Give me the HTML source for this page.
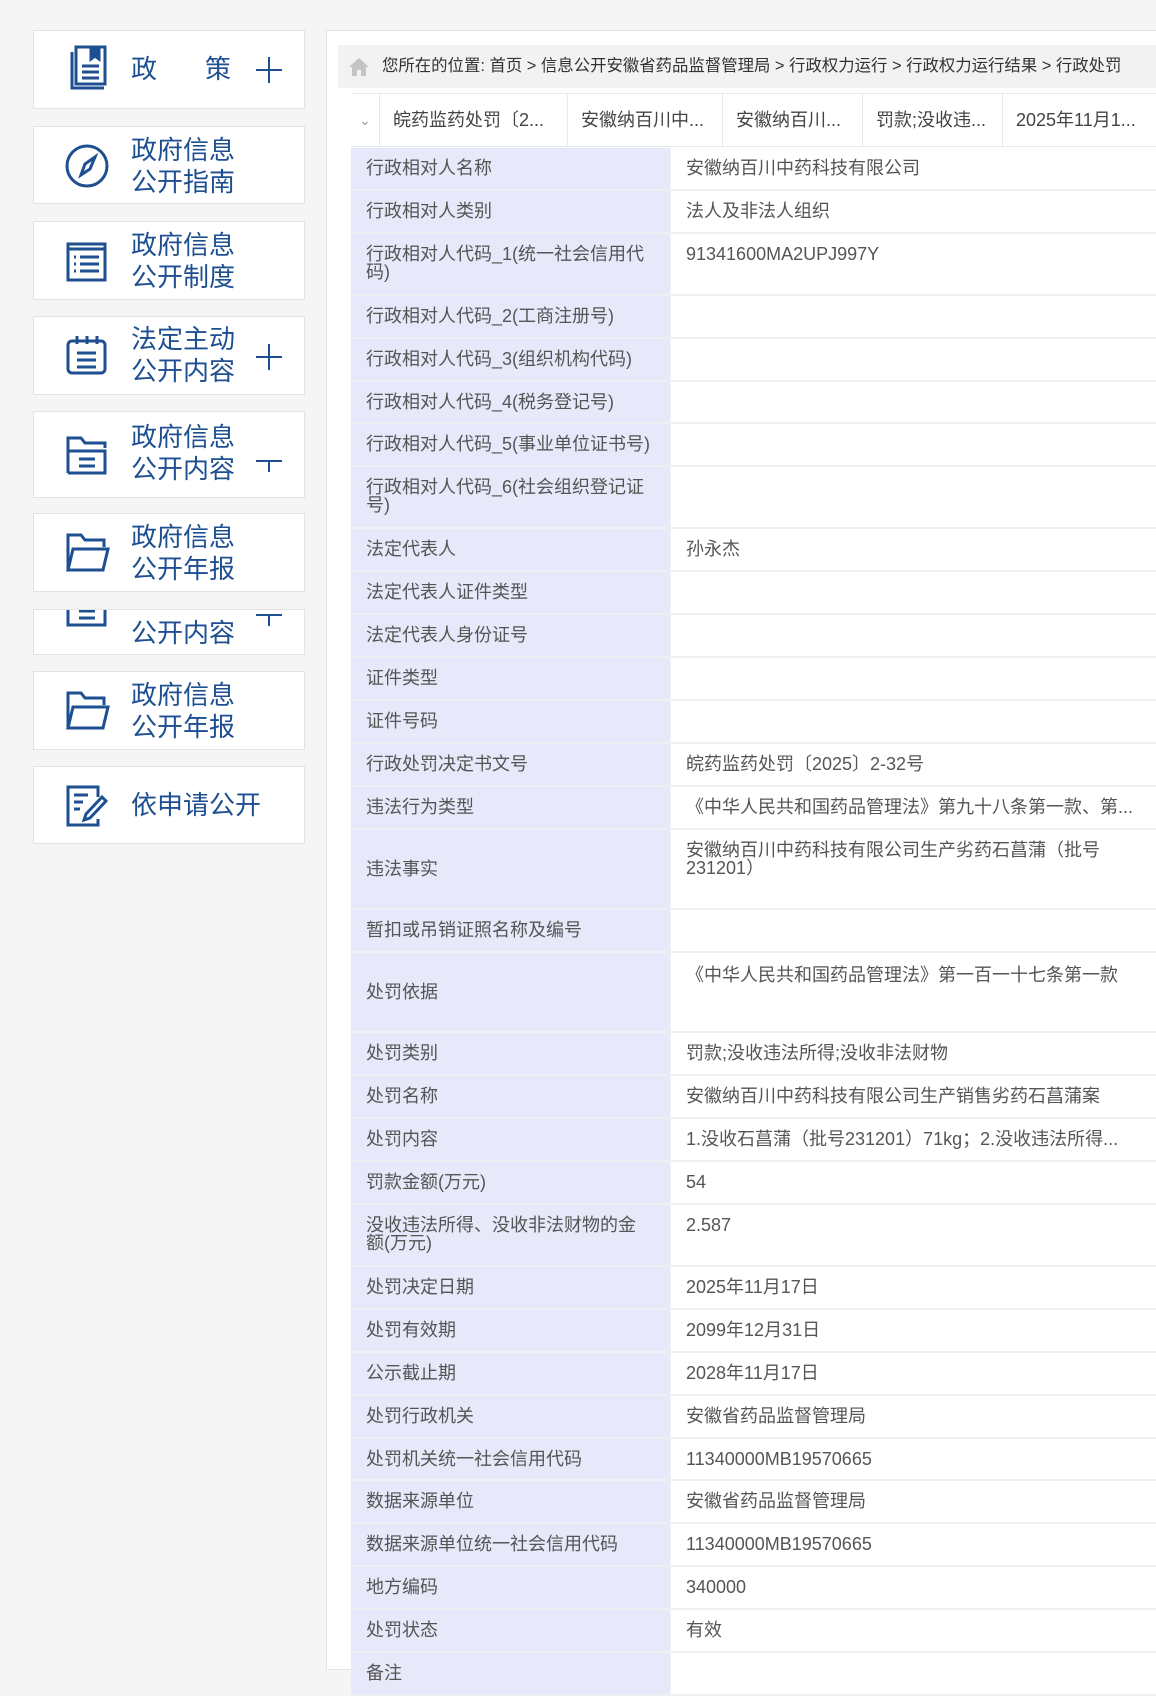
<!DOCTYPE html>
<html><head><meta charset="utf-8"><style>
*{margin:0;padding:0;box-sizing:border-box}
body{width:1156px;height:1662px;overflow:hidden;background:#f5f5f5;font-family:"Liberation Sans","Noto Sans CJK SC",sans-serif;position:relative}
.sb{position:absolute;left:33px;width:272px;background:#fff;border:1px solid #e3e3e3;overflow:hidden}
.sb svg{position:absolute;left:30px}
.sb .t{position:absolute;left:97px;color:#1d4f91;font-size:26px;line-height:32px;white-space:nowrap}
.plus{position:absolute;left:222px;width:26px;height:26px}
.plus:before{content:"";position:absolute;left:0;top:12px;width:26px;height:2px;background:#1d4f91}
.plus:after{content:"";position:absolute;left:12px;top:0;width:2px;height:26px;background:#1d4f91}
#panel{position:absolute;left:326px;top:30px;width:840px;height:1640px;background:#fff;border:1px solid #e3e3e3}
#bc{position:absolute;left:338px;top:45px;width:820px;height:43px;background:#f2f2f2;font-size:16.4px;color:#333;line-height:43px;padding-left:44px;white-space:nowrap}
#hdr{position:absolute;left:351px;top:93px;width:810px;height:54px;border-top:1px solid #e8e8f0;border-bottom:1px solid #e8e8f0;font-size:18px;color:#444}
#hdr div{position:absolute;top:0;height:52px;line-height:52px;border-left:1px solid #e8e8f0;padding-left:13px;white-space:nowrap}
#tb{position:absolute;left:351px;top:148px;width:810px;font-size:18px;color:#555}
.r{display:flex;border-bottom:2px solid #eef0f4;height:42.9px}
.h{height:62px}.x{height:80.5px}
.l{width:319px;background:#e7e8f9;padding:11px 0 0 15px;line-height:18px}
.v{flex:1;padding:11px 0 0 15px;background:#fff;line-height:18px;border-left:1px solid #eef0f4}
.m{display:flex;align-items:center;padding-top:0}
</style></head><body>
<div class="sb" style="top:30px;height:79px">
<svg style="top:13px" width="48" height="48" viewBox="0 0 48 48" fill="none" stroke="#1d4f91" stroke-width="3"><path d="M8 8v36h32"/><path d="M12 3h29v37H12z"/><path d="M27 3v12l4-3 4 3V3" fill="#1d4f91"/><path d="M18 22h17M18 28h17M18 34h17"/></svg>
<div class="t" style="top:22px">政<span style="display:inline-block;width:48px"></span>策</div><div class="plus" style="top:26px"></div></div>
<div class="sb" style="top:126px;height:78px">
<svg style="top:16px" width="46" height="46" viewBox="0 0 46 46" fill="none" stroke="#1d4f91" stroke-width="3"><circle cx="23" cy="23" r="20"/><path d="M31 14l-5 12-9 6 4-11z"/></svg>
<div class="t" style="top:7px">政府信息<br>公开指南</div></div>
<div class="sb" style="top:221px;height:79px">
<svg style="top:16px" width="46" height="46" viewBox="0 0 46 46" fill="none" stroke="#1d4f91" stroke-width="3"><path d="M4 6h37v36H4z"/><path d="M4 11h37"/><path d="M10 19h2M16 19h19M10 26h2M16 26h19M10 33h2M16 33h19"/></svg>
<div class="t" style="top:7px">政府信息<br>公开制度</div></div>
<div class="sb" style="top:316px;height:79px">
<svg style="top:16px" width="46" height="46" viewBox="0 0 46 46" fill="none" stroke="#1d4f91" stroke-width="3"><rect x="4" y="8" width="37" height="32" rx="4"/><path d="M13 3v8M23 3v8M33 3v8M13 20h19M13 27h19M13 34h19"/></svg>
<div class="t" style="top:6px">法定主动<br>公开内容</div><div class="plus" style="top:27px"></div></div>
<div class="sb" style="top:411px;height:87px">
<svg style="top:21px" width="46" height="46" viewBox="0 0 46 46" fill="none" stroke="#1d4f91" stroke-width="3"><path d="M4 40V5h13l4 5h20v5M4 18h37v22H4"/><path d="M15 26h16M15 33h16"/></svg>
<div class="t" style="top:9px">政府信息<br>公开内容</div><div style="position:absolute;left:222px;top:48px;width:26px;height:2px;background:#1d4f91"></div><div style="position:absolute;left:234px;top:48px;width:2px;height:12px;background:#1d4f91"></div></div>
<div class="sb" style="top:513px;height:79px">
<svg style="top:16px" width="46" height="46" viewBox="0 0 46 46" fill="none" stroke="#1d4f91" stroke-width="3"><path d="M4 40V5h13l4 5h19v7"/><path d="M4 40l5-21h35l-5 21z"/></svg>
<div class="t" style="top:7px">政府信息<br>公开年报</div></div>
<div class="sb" style="top:609px;height:46px">
<svg style="top:-25px" width="46" height="46" viewBox="0 0 46 46" fill="none" stroke="#1d4f91" stroke-width="3"><path d="M4 18h37v22H4z"/><path d="M15 26h16M15 33h16"/></svg>
<div class="t" style="top:7px">公开内容</div><div style="position:absolute;left:222px;top:4px;width:26px;height:2px;background:#1d4f91"></div><div style="position:absolute;left:234px;top:4px;width:2px;height:12px;background:#1d4f91"></div></div>
<div class="sb" style="top:671px;height:79px">
<svg style="top:16px" width="46" height="46" viewBox="0 0 46 46" fill="none" stroke="#1d4f91" stroke-width="3"><path d="M4 40V5h13l4 5h19v7"/><path d="M4 40l5-21h35l-5 21z"/></svg>
<div class="t" style="top:7px">政府信息<br>公开年报</div></div>
<div class="sb" style="top:766px;height:78px">
<svg style="top:16px" width="46" height="46" viewBox="0 0 46 46" fill="none" stroke="#1d4f91" stroke-width="3"><path d="M34 14V4H4v38h30v-6"/><path d="M10 12h14M10 19h9M10 26h6"/><path d="M38 14l4 4-16 17-6 2 2-6z"/></svg>
<div class="t" style="top:22px">依申请公开</div></div>

<div id="panel"></div>
<div id="bc"><svg style="position:absolute;left:10px;top:12px" width="22" height="20" viewBox="0 0 22 20"><path d="M11 1L1 10h3v9h5v-6h4v6h5v-9h3z" fill="#c4c4c4"/></svg>您所在的位置: 首页 &gt; 信息公开安徽省药品监督管理局 &gt; 行政权力运行 &gt; 行政权力运行结果 &gt; 行政处罚</div>
<div id="hdr">
<div style="left:0;width:28px;border-left:none;padding-left:8px;color:#999;font-size:14px">&#8964;</div>
<div style="left:28px">皖药监药处罚〔2...</div>
<div style="left:216px">安徽纳百川中...</div>
<div style="left:371px">安徽纳百川...</div>
<div style="left:511px">罚款;没收违...</div>
<div style="left:651px">2025年11月1...</div>
</div>
<div id="tb">
<div class="r"><div class="l">行政相对人名称</div><div class="v">安徽纳百川中药科技有限公司</div></div>
<div class="r"><div class="l">行政相对人类别</div><div class="v">法人及非法人组织</div></div>
<div class="r h"><div class="l">行政相对人代码_1(统一社会信用代<br>码)</div><div class="v">91341600MA2UPJ997Y</div></div>
<div class="r"><div class="l">行政相对人代码_2(工商注册号)</div><div class="v"></div></div>
<div class="r"><div class="l">行政相对人代码_3(组织机构代码)</div><div class="v"></div></div>
<div class="r"><div class="l">行政相对人代码_4(税务登记号)</div><div class="v"></div></div>
<div class="r"><div class="l">行政相对人代码_5(事业单位证书号)</div><div class="v"></div></div>
<div class="r h"><div class="l">行政相对人代码_6(社会组织登记证<br>号)</div><div class="v"></div></div>
<div class="r"><div class="l">法定代表人</div><div class="v">孙永杰</div></div>
<div class="r"><div class="l">法定代表人证件类型</div><div class="v"></div></div>
<div class="r"><div class="l">法定代表人身份证号</div><div class="v"></div></div>
<div class="r"><div class="l">证件类型</div><div class="v"></div></div>
<div class="r"><div class="l">证件号码</div><div class="v"></div></div>
<div class="r"><div class="l">行政处罚决定书文号</div><div class="v">皖药监药处罚〔2025〕2-32号</div></div>
<div class="r"><div class="l">违法行为类型</div><div class="v">《中华人民共和国药品管理法》第九十八条第一款、第...</div></div>
<div class="r x"><div class="l m">违法事实</div><div class="v">安徽纳百川中药科技有限公司生产劣药石菖蒲（批号<br>231201）</div></div>
<div class="r"><div class="l">暂扣或吊销证照名称及编号</div><div class="v"></div></div>
<div class="r x"><div class="l m">处罚依据</div><div class="v" style="padding-top:13px">《中华人民共和国药品管理法》第一百一十七条第一款</div></div>
<div class="r"><div class="l">处罚类别</div><div class="v">罚款;没收违法所得;没收非法财物</div></div>
<div class="r"><div class="l">处罚名称</div><div class="v">安徽纳百川中药科技有限公司生产销售劣药石菖蒲案</div></div>
<div class="r"><div class="l">处罚内容</div><div class="v">1.没收石菖蒲（批号231201）71kg；2.没收违法所得...</div></div>
<div class="r"><div class="l">罚款金额(万元)</div><div class="v">54</div></div>
<div class="r h"><div class="l">没收违法所得、没收非法财物的金<br>额(万元)</div><div class="v">2.587</div></div>
<div class="r"><div class="l">处罚决定日期</div><div class="v">2025年11月17日</div></div>
<div class="r"><div class="l">处罚有效期</div><div class="v">2099年12月31日</div></div>
<div class="r"><div class="l">公示截止期</div><div class="v">2028年11月17日</div></div>
<div class="r"><div class="l">处罚行政机关</div><div class="v">安徽省药品监督管理局</div></div>
<div class="r"><div class="l">处罚机关统一社会信用代码</div><div class="v">11340000MB19570665</div></div>
<div class="r"><div class="l">数据来源单位</div><div class="v">安徽省药品监督管理局</div></div>
<div class="r"><div class="l">数据来源单位统一社会信用代码</div><div class="v">11340000MB19570665</div></div>
<div class="r"><div class="l">地方编码</div><div class="v">340000</div></div>
<div class="r"><div class="l">处罚状态</div><div class="v">有效</div></div>
<div class="r"><div class="l">备注</div><div class="v"></div></div>
</div>
</body></html>
